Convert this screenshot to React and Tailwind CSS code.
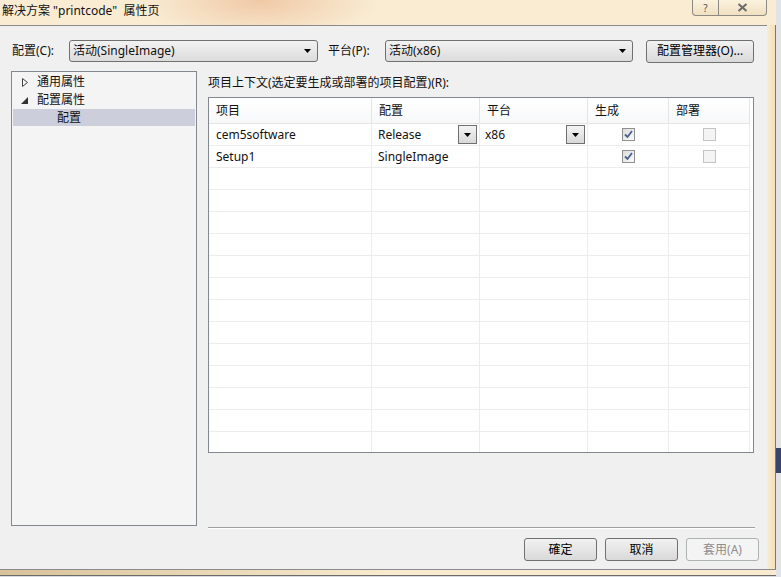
import React from 'react';

const font = { fontFamily: '"Noto Sans", "Noto Sans CJK SC", sans-serif' };

const Arrow = () => (
  <svg width="7" height="4" viewBox="0 0 7 4">
    <path d="M0 0 H7 L3.5 4 Z" fill="#000" />
  </svg>
);

const Combo = ({ value, className }) => (
  <div
    className={`h-[22px] flex items-center justify-between border border-[#707070] rounded-[3px] bg-gradient-to-b from-[#f2f2f2] to-[#dcdcdc] pl-[3px] pr-[6px] ${className}`}
  >
    <span>{value}</span>
    <Arrow />
  </div>
);

const Btn = ({ children, className = '', disabled }) => (
  <div
    className={`h-[23px] flex items-center justify-center rounded-[3px] border ${
      disabled
        ? 'border-[#adb2b5] bg-[#f4f4f4] text-[#8d8d8d]'
        : 'border-[#707070] bg-gradient-to-b from-[#f2f2f2] to-[#d9d9d9] text-black'
    } ${className}`}
  >
    {children}
  </div>
);

const Check = ({ checked, disabled }) => (
  <div
    className={`w-[13px] h-[13px] border flex items-center justify-center ${
      disabled ? 'border-[#c4c4c4] bg-[#f4f4f4]' : 'border-[#8f8f8f] bg-gradient-to-br from-[#dcdcdc] to-[#fbfbfb]'
    }`}
  >
    {checked && (
      <svg width="9" height="9" viewBox="0 0 9 9">
        <path d="M1 4.5 L3.5 7 L8 1" stroke="#4a5f8f" strokeWidth="1.8" fill="none" />
      </svg>
    )}
  </div>
);

const cols = 'grid grid-cols-[163px_108px_108px_81px_81px]';
const cell = 'border-r border-[#ececec] h-[22px] border-b flex items-center';

const rows = [
  { name: 'cem5software', cfg: 'Release', plat: 'x86', combo: true },
  { name: 'Setup1', cfg: 'SingleImage', plat: '', combo: false },
];

export default function App() {
  return (
    <div className="w-[781px] h-[577px] overflow-hidden flex bg-[#d8dae0] text-[12px] text-[#111]" style={font}>
      {/* Window */}
      <div className="w-[776px] h-[576px] flex flex-col relative bg-[#f7e9cd] border-b border-[#6b6b6b]">
        {/* Title bar */}
        <div className="h-[25px] flex items-center pl-[2px] pb-[3px] whitespace-pre bg-[radial-gradient(ellipse_120px_40px_at_260px_0px,#f0c9a6_0%,#f9ecd3_100%)]">
          解决方案 "printcode"  属性页
        </div>
        <div className="absolute left-[692px] top-0 w-[75px] h-[16px] flex border border-t-0 border-[#8d8a84] rounded-b-[4px] bg-gradient-to-b from-[#fbf2df] to-[#f0e0c0] text-[#555]">
          <div className="w-[26px] flex items-center justify-center border-r border-[#8d8a84] text-[10px] leading-[12px]">?</div>
          <div className="flex-1 flex items-center justify-center">
            <svg width="11" height="9" viewBox="0 0 11 9">
              <path d="M1.5 1 L9.5 8 M9.5 1 L1.5 8" stroke="#6a6a6a" strokeWidth="2" fill="none" />
            </svg>
          </div>
        </div>

        <div className="flex-1 flex">
          {/* Client area */}
          <div className="w-[767px] h-[544px] bg-[#f0f0f0] border-t border-[#8a8a8a] flex flex-col">
            {/* Top row */}
            <div className="flex items-center mt-[14px] h-[22px]">
              <span className="ml-[12px] w-[57px]">配置(C):</span>
              <Combo value="活动(SingleImage)" className="w-[249px]" />
              <span className="ml-[10px] w-[57px]">平台(P):</span>
              <Combo value="活动(x86)" className="w-[248px]" />
              <Btn className="ml-[13px] w-[108px]">配置管理器(O)...</Btn>
            </div>

            {/* Main */}
            <div className="flex mt-[9px]">
              {/* Tree */}
              <div className="ml-[11px] w-[186px] h-[455px] border border-[#828790] bg-[#f4f4f4] pt-[1px] pl-[1px] pr-[1px]">
                <div className="h-[18px] flex items-center">
                  <svg className="ml-[9px] mr-[9px]" width="6" height="9" viewBox="0 0 6 9">
                    <path d="M0.5 0.5 L5.5 4.5 L0.5 8.5 Z" fill="none" stroke="#444" />
                  </svg>
                  <span>通用属性</span>
                </div>
                <div className="h-[18px] flex items-center">
                  <svg className="ml-[8px] mr-[9px]" width="7" height="7" viewBox="0 0 7 7">
                    <path d="M7 0 L7 7 L0 7 Z" fill="#333" />
                  </svg>
                  <span>配置属性</span>
                </div>
                <div className="h-[17px] flex items-center bg-[#cccedb] pl-[44px]">配置</div>
              </div>

              {/* Right */}
              <div className="ml-[11px] flex flex-col">
                <div className="h-[26px] flex items-start pt-[3px]">项目上下文(选定要生成或部署的项目配置)(R):</div>
                <div className="w-[546px] h-[356px] border border-[#828790] bg-white overflow-hidden">
                  <div className={`${cols} h-[26px]`}>
                    {['项目', '配置', '平台', '生成', '部署'].map((h) => (
                      <div key={h} className="border-r border-b border-[#e5e5e5] pl-[7px] pt-[1px] flex items-center bg-gradient-to-b from-white to-[#f7f8f9]">
                        {h}
                      </div>
                    ))}
                  </div>
                  {rows.map((r) => (
                    <div key={r.name} className={cols}>
                      <div className={`${cell} pl-[7px]`}>{r.name}</div>
                      <div className={`${cell} pl-[6px] pr-[2px] justify-between`}>
                        <span>{r.cfg}</span>
                        {r.combo && (
                          <div className="w-[19px] h-[19px] border border-[#707070] bg-gradient-to-b from-[#f4f4f4] to-[#d8d8d8] flex items-center justify-center">
                            <Arrow />
                          </div>
                        )}
                      </div>
                      <div className={`${cell} pl-[5px] pr-[2px] justify-between`}>
                        <span>{r.plat}</span>
                        {r.combo && (
                          <div className="w-[19px] h-[19px] border border-[#707070] bg-gradient-to-b from-[#f4f4f4] to-[#d8d8d8] flex items-center justify-center">
                            <Arrow />
                          </div>
                        )}
                      </div>
                      <div className={`${cell} justify-center`}>
                        <Check checked />
                      </div>
                      <div className={`${cell} justify-center`}>
                        <Check disabled />
                      </div>
                    </div>
                  ))}
                  {Array.from({ length: 14 }).map((_, i) => (
                    <div key={i} className={cols}>
                      {[0, 1, 2, 3, 4].map((c) => (
                        <div key={c} className="border-r border-b border-[#ececec] h-[22px]" />
                      ))}
                    </div>
                  ))}
                </div>
              </div>
            </div>

            {/* Separator */}
            <div className="ml-[208px] w-[547px] h-[1px] bg-[#a0a0a0] mt-[1px] border-b border-white box-content" />

            {/* Buttons */}
            <div className="flex mt-[9px] ml-[524px]">
              <Btn className="w-[73px]">確定</Btn>
              <Btn className="ml-[8px] w-[73px]">取消</Btn>
              <Btn disabled className="ml-[8px] w-[73px]">套用(A)</Btn>
            </div>
          </div>
          {/* Right frame */}
          <div className="flex-1 bg-gradient-to-r from-[#f9ecd3] to-[#f3dfba] border-r border-[#777]" />
        </div>
        {/* Bottom frame */}
        <div className="h-[6px] bg-gradient-to-r from-[#d8c29a] via-[#f9ebcf] to-[#f9ebcf] border-t border-[#8a8a8a]" />
      </div>

      {/* Outside */}
      <div className="flex-1 flex flex-col">
        <div className="h-[448px] bg-[#e2e3e8]" />
        <div className="h-[25px] bg-[#34466e]" />
        <div className="flex-1 bg-[#e2e3e8]" />
      </div>
    </div>
  );
}
